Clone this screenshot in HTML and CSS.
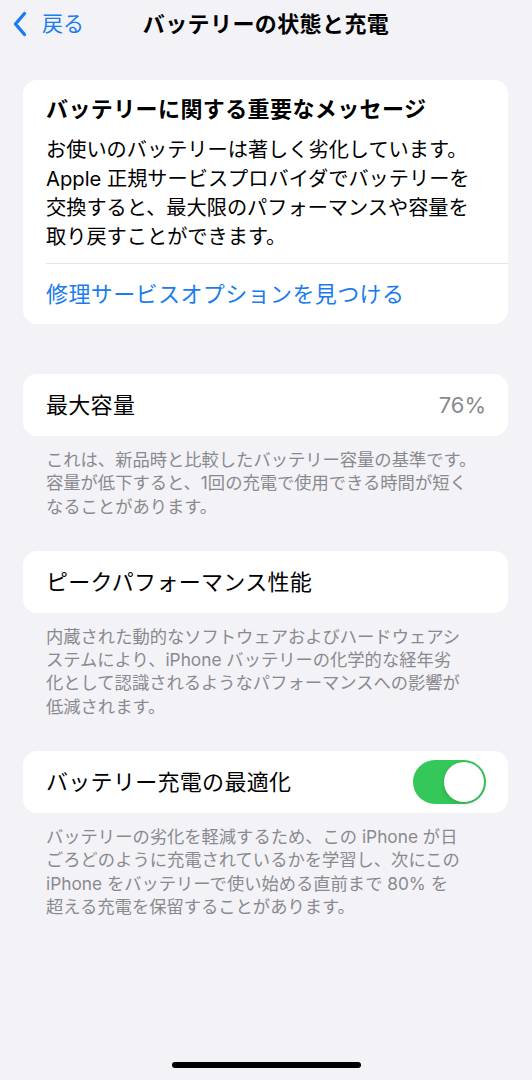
FILE: index.html
```html
<!DOCTYPE html>
<html lang="ja">
<head>
    <meta charset="UTF-8">
    <meta name="viewport" content="width=device-width, initial-scale=1.0">
    <title>バッテリーの状態と充電</title>
    <link rel="stylesheet" href="styles.css">
</head>
<body>
    <header class="nav">
        <a class="back" href="#">
            <svg class="chevron" width="14" height="26" viewBox="0 0 14 26">
                <path d="M11.5 2.5 L2.5 13 L11.5 23.5" fill="none" stroke="currentColor" stroke-width="3.4" stroke-linecap="round" stroke-linejoin="round"/>
            </svg>
            <span>戻る</span>
        </a>
        <h1 class="nav-title">バッテリーの状態と充電</h1>
        <span></span>
    </header>

    <main class="content">
        <!-- important message -->
        <section class="group group-first">
            <div class="card">
                <div class="message">
                    <h2>バッテリーに関する重要なメッセージ</h2>
                    <p>お使いのバッテリーは著しく劣化しています。<br>Apple 正規サービスプロバイダでバッテリーを<br>交換すると、最大限のパフォーマンスや容量を<br>取り戻すことができます。</p>
                </div>
                <a class="card-link" href="#">修理サービスオプションを見つける</a>
            </div>
        </section>

        <!-- maximum capacity -->
        <section class="group">
            <div class="card">
                <div class="row">
                    <span class="row-label">最大容量</span>
                    <span class="row-value">76%</span>
                </div>
            </div>
            <p class="footnote">これは、新品時と比較したバッテリー容量の基準です。<br>容量が低下すると、1回の充電で使用できる時間が短く<br>なることがあります。</p>
        </section>

        <!-- peak performance -->
        <section class="group">
            <div class="card">
                <div class="row">
                    <span class="row-label">ピークパフォーマンス性能</span>
                </div>
            </div>
            <p class="footnote">内蔵された動的なソフトウェアおよびハードウェアシ<br>ステムにより、iPhone バッテリーの化学的な経年劣<br>化として認識されるようなパフォーマンスへの影響が<br>低減されます。</p>
        </section>

        <!-- optimized charging -->
        <section class="group">
            <div class="card">
                <div class="row">
                    <span class="row-label">バッテリー充電の最適化</span>
                    <span class="toggle on"><span class="knob"></span></span>
                </div>
            </div>
            <p class="footnote">バッテリーの劣化を軽減するため、この iPhone が日<br>ごろどのように充電されているかを学習し、次にこの<br>iPhone をバッテリーで使い始める直前まで 80% を<br>超える充電を保留することがあります。</p>
        </section>
    </main>

    <div class="home-indicator"></div>
</body>
</html>
```

FILE: styles.css
```css
body {
    font-family: "Inter", "Noto Sans CJK JP", sans-serif;
    background-color: #f2f2f7;
    color: #000;
    margin: 0;
    padding: 0;
    min-height: 1080px;
}

/* navigation bar */
.nav {
    display: grid;
    grid-template-columns: 1fr auto 1fr;
    align-items: center;
    height: 48px;
}

.back {
    display: flex;
    align-items: center;
    gap: 15px;
    padding-left: 13px;
    color: #1a7cf0;
    text-decoration: none;
    font-size: 21px;
    line-height: 28px;
}

.chevron {
    display: block;
}

.nav-title {
    margin: 0;
    font-size: 22px;
    font-weight: 600;
    line-height: 28px;
    letter-spacing: 0.4px;
}

/* grouped list */
.content {
    padding: 0 24px 0 23px;
}

.group {
    margin-top: 33px;
}

.group-first {
    margin-top: 32px;
    margin-bottom: 50px;
}

.card {
    background-color: #fff;
    border-radius: 14px;
    overflow: hidden;
}

.message {
    padding: 14px 23px 12px;
}

.message h2 {
    margin: 0 0 11px;
    font-size: 22px;
    font-weight: 600;
    line-height: 30px;
    letter-spacing: 0.4px;
}

.message p {
    margin: 0;
    font-size: 20.2px;
    line-height: 29px;
}

.card-link {
    display: flex;
    align-items: center;
    height: 60px;
    margin-left: 23px;
    border-top: 1px solid #e3e3e8;
    color: #1a7cf0;
    text-decoration: none;
    font-size: 22px;
    line-height: 30px;
    letter-spacing: 0.4px;
}

.row {
    display: flex;
    align-items: center;
    justify-content: space-between;
    height: 62px;
    padding: 0 22px 0 23px;
}

.row-label {
    font-size: 22px;
    line-height: 30px;
    letter-spacing: 0.3px;
}

.row-value {
    color: #8a8a8e;
    font-size: 22px;
    line-height: 30px;
}

.footnote {
    margin: 12px 0 0;
    padding: 0 23px;
    color: #8a8a8e;
    font-size: 17.3px;
    line-height: 23.3px;
}

/* switch */
.toggle {
    display: flex;
    align-items: center;
    width: 73px;
    height: 44px;
    border-radius: 22px;
    background-color: #e9e9eb;
    padding: 2px;
    box-sizing: border-box;
}

.toggle.on {
    background-color: #34c759;
    justify-content: flex-end;
}

.knob {
    width: 40px;
    height: 40px;
    border-radius: 50%;
    background-color: #fff;
    box-shadow: 0 2px 5px rgba(0, 0, 0, 0.15);
}

.home-indicator {
    position: fixed;
    left: 172px;
    bottom: 12px;
    width: 189px;
    height: 6px;
    border-radius: 3px;
    background-color: #000;
}
```
